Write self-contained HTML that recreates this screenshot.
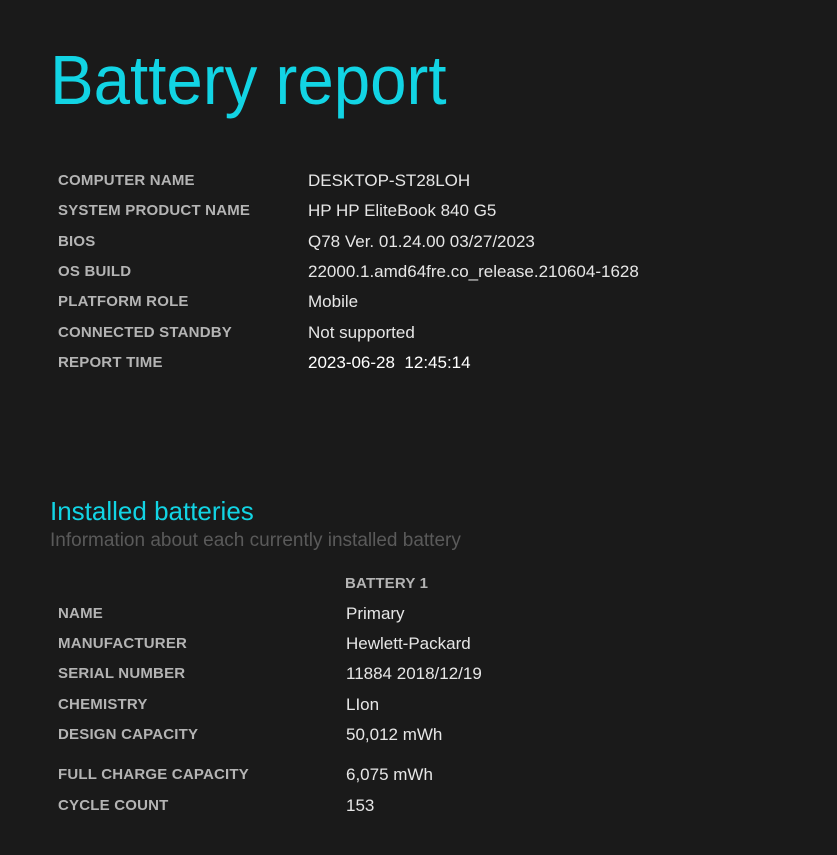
<!DOCTYPE html>
<html><head><meta charset="utf-8"><style>
html,body{margin:0;padding:0;background:#1a1a1a;width:837px;height:855px;overflow:hidden;font-family:"Liberation Sans","DejaVu Sans",sans-serif;}
.a{position:absolute;line-height:20px;height:20px;white-space:nowrap;margin-top:1px}
.l{font-size:15px;font-weight:bold;color:#b4b4b4;letter-spacing:0.2px}
.v{font-size:17px;color:#e6e6e6}
#t{position:absolute;left:50px;top:38px;font-size:70px;line-height:84px;color:#12d4e4;transform-origin:0 0;transform:scaleX(0.935);white-space:nowrap}
</style></head><body>
<div id="t">Battery report</div>

<div class="a l" style="left:58px;top:170px">COMPUTER NAME</div><div class="a v" style="left:308px;top:170px">DESKTOP-ST28LOH</div>
<div class="a l" style="left:58px;top:200px">SYSTEM PRODUCT NAME</div><div class="a v" style="left:308px;top:200px">HP HP EliteBook 840 G5</div>
<div class="a l" style="left:58px;top:231px">BIOS</div><div class="a v" style="left:308px;top:231px">Q78 Ver. 01.24.00 03/27/2023</div>
<div class="a l" style="left:58px;top:261px">OS BUILD</div><div class="a v" style="left:308px;top:261px">22000.1.amd64fre.co_release.210604-1628</div>
<div class="a l" style="left:58px;top:291px">PLATFORM ROLE</div><div class="a v" style="left:308px;top:291px">Mobile</div>
<div class="a l" style="left:58px;top:322px">CONNECTED STANDBY</div><div class="a v" style="left:308px;top:322px">Not supported</div>
<div class="a l" style="left:58px;top:352px">REPORT TIME</div><div class="a v" style="left:308px;top:352px;color:#fff">2023-06-28&nbsp;&nbsp;12:45:14</div>

<div class="a" style="left:50px;top:496px;height:28px;line-height:28px;font-size:26px;color:#12d4e4">Installed batteries</div>
<div class="a" style="left:50px;top:530px;font-size:19px;color:#5a5a5a">Information about each currently installed battery</div>

<div class="a l" style="left:345px;top:573px">BATTERY 1</div>
<div class="a l" style="left:58px;top:603px">NAME</div><div class="a v" style="left:346px;top:603px">Primary</div>
<div class="a l" style="left:58px;top:633px">MANUFACTURER</div><div class="a v" style="left:346px;top:633px">Hewlett-Packard</div>
<div class="a l" style="left:58px;top:663px">SERIAL NUMBER</div><div class="a v" style="left:346px;top:663px">11884 2018/12/19</div>
<div class="a l" style="left:58px;top:694px">CHEMISTRY</div><div class="a v" style="left:346px;top:694px">LIon</div>
<div class="a l" style="left:58px;top:724px">DESIGN CAPACITY</div><div class="a v" style="left:346px;top:724px">50,012 mWh</div>
<div class="a l" style="left:58px;top:764px">FULL CHARGE CAPACITY</div><div class="a v" style="left:346px;top:764px">6,075 mWh</div>
<div class="a l" style="left:58px;top:795px">CYCLE COUNT</div><div class="a v" style="left:346px;top:795px">153</div>
</body></html>
